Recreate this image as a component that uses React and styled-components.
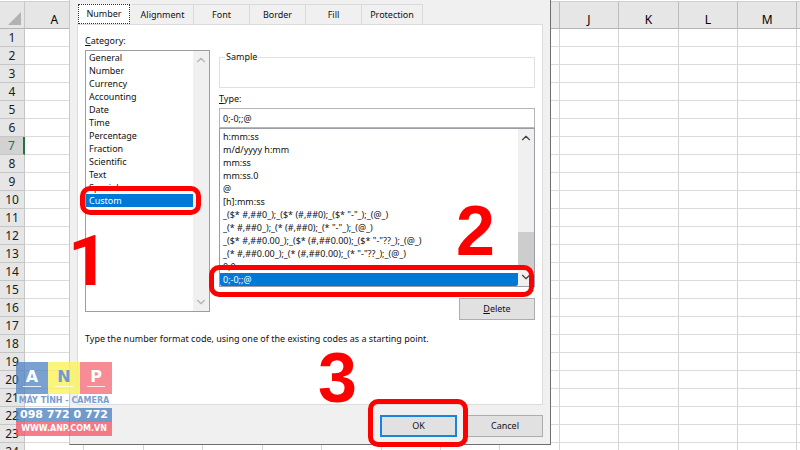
import { useState } from "react"
import { ChevronDown, ChevronUp } from "lucide-react"
import styled, { createGlobalStyle } from "styled-components"

const GlobalStyle = createGlobalStyle`
  * {
    box-sizing: border-box;
  }
  body {
    margin: 0;
    background-color: white;
    color: #111;
    font-family: "Noto Sans", "Open Sans", sans-serif;
  }
`;

const Page = styled.main`
  position: relative;
  height: 100vh;
  overflow: hidden;
`;

const Sheet = styled.table`
  width: calc(100% + 57px);
  margin-top: 1px;
  table-layout: fixed;
  border-collapse: separate;
  border-spacing: 0;
  border-top: 1px solid #cfcfcf;
`;

const Corner = styled.th`
  width: 25px;
  height: 27px;
  padding: 0 2px 2px 0;
  text-align: right;
  vertical-align: bottom;
  background-color: #e6e6e6;
  border-right: 1px solid #c6c6c6;
  border-bottom: 1px solid #b4b4b4;

  svg {
    display: block;
    margin-left: auto;
  }
`;

const ColumnHead = styled.th`
  height: 27px;
  padding: 10px 0 0;
  font-size: 12px;
  line-height: 16px;
  font-weight: 400;
  color: black;
  background-color: #e6e6e6;
  border-right: 1px solid #bcbcbc;
  border-bottom: 1px solid #b4b4b4;
`;

const RowHead = styled.th`
  height: 18px;
  padding: 0;
  font-size: 12px;
  line-height: 17px;
  font-weight: 400;
  text-align: center;
  color: ${(props) => (props.$active ? "#217346" : "#1c1c1c")};
  background-color: ${(props) => (props.$active ? "#d2d2d2" : "#e6e6e6")};
  border-right: ${(props) =>
    props.$active ? "2px solid #217346" : "1px solid #c6c6c6"};
  border-bottom: 1px solid #c6c6c6;
`;

const Cell = styled.td`
  padding: 0;
  border-right: 1px solid #d4d4d4;
  border-bottom: 1px solid #dcdcdc;
`;

const Dialog = styled.section`
  position: absolute;
  top: 0;
  left: 69px;
  width: calc(60vw + 2px);
  padding: 4px 7px 7px;
  font-size: 9px;
  line-height: 14px;
  background-color: #f0f0f0;
  border: 1px solid #6e6e6e;
  border-top: none;
  border-left-color: #c8c8c8;
`;

const Tabs = styled.div`
  display: flex;
  height: 20px;
`;

const Tab = styled.button`
  width: ${(props) => props.$width}px;
  padding: 0;
  font: inherit;
  line-height: 14px;
  color: inherit;
  background-color: #f0f0f0;
  border: solid #d9d9d9;
  border-width: 1px 1px 0 0;

  &[aria-selected="true"] {
    margin: 0 2px 0 1px;
    background-color: white;
    border: 1px dotted #333;
  }
`;

const Panel = styled.div`
  padding: 9px 7px 58px;
  background-color: white;
  border: 1px solid #dcdcdc;
`;

const Columns = styled.div`
  display: flex;
  gap: 9px;
`;

const CategoryColumn = styled.div`
  flex: 0 0 125px;
`;

const TypeColumn = styled.div`
  flex: 1;
  display: flex;
  flex-direction: column;
  padding-top: 16px;
`;

const Label = styled.label`
  display: block;
  margin-bottom: 2px;
`;

const ListFrame = styled.div`
  position: relative;
  display: flex;
  height: ${(props) => props.$height}px;
  background-color: white;
  border: 1px solid #9a9da3;
`;

const List = styled.select`
  flex: 1;
  min-width: 0;
  height: 100%;
  padding: ${(props) => props.$padding || "0"};
  overflow: hidden;
  font: inherit;
  color: inherit;
  background-color: white;
  border: none;
  outline: none;

  option {
    min-height: 13px;
    height: 13px;
    padding: 0 3px;
    line-height: 13px;
    overflow: hidden;
  }
  option:checked {
    color: white;
    -webkit-text-fill-color: white;
    background: linear-gradient(#0078d7, #0078d7);
  }
`;

const ScrollBar = styled.div`
  flex: 0 0 16px;
  display: flex;
  flex-direction: column;
  align-items: center;
  justify-content: space-between;
  padding: 2px 0;
  color: ${(props) => (props.$disabled ? "#b4b4b4" : "#404040")};
  background-color: #f0f0f0;
`;

const ScrollThumb = styled.div`
  width: 100%;
  height: 38px;
  margin-top: auto;
  background-color: #cdcdcd;
`;

const Sample = styled.fieldset`
  height: 38px;
  margin: 0 0 4px;
  padding: 0 5px;
  border: 1px solid #e0e0e0;
`;

const Legend = styled.legend`
  padding: 0 1px;
`;

const TypeInput = styled.input`
  width: 100%;
  height: 20px;
  padding: 0 3px;
  font: inherit;
  color: inherit;
  background-color: white;
  border: 1px solid #b4b6ba;
  outline: none;
`;

const Button = styled.button`
  width: ${(props) => props.$width || 76}px;
  height: 22px;
  padding: 0;
  font: inherit;
  color: inherit;
  background-color: #e1e1e1;
  border: ${(props) =>
    props.$primary ? "2px solid #1a84da" : "1px solid #adadad"};
`;

const DeleteButton = styled(Button)`
  align-self: flex-end;
  margin-top: 11px;
`;

const Hint = styled.p`
  margin: 12px 0 0;
  white-space: nowrap;
`;

const Footer = styled.div`
  display: flex;
  justify-content: flex-end;
  gap: 10px;
  padding-top: 10px;
`;

const OkSlot = styled.div`
  position: relative;
`;

const Callout = styled.div`
  position: absolute;
  inset: ${(props) => props.$inset};
  border: 5px solid #ff0000;
  border-radius: 10px;
  pointer-events: none;
`;

const Step = styled.span`
  position: absolute;
  top: ${(props) => props.$top}px;
  left: ${(props) => props.$left};
  right: ${(props) => props.$right};
  font-family: ${(props) =>
    props.$plain ? "Roboto, sans-serif" : '"Liberation Sans", Arial, sans-serif'};
  font-size: 70px;
  line-height: 72px;
  font-weight: 700;
  color: #ff0000;
  pointer-events: none;
`;

const Logo = styled.div`
  position: absolute;
  top: 362px;
  left: 16px;
  width: 96px;
  font-family: "DejaVu Sans", sans-serif;
  font-weight: 700;
  text-align: center;
  white-space: nowrap;
  color: white;
`;

const LogoTiles = styled.div`
  display: flex;
`;

const LogoTile = styled.div`
  flex: 1;
  display: flex;
  flex-direction: column;
  align-items: center;
  height: 32px;
  padding-top: 6px;
  font-size: 16px;
  line-height: 18px;
  color: ${(props) => props.$ink || "white"};
  background-color: ${(props) => props.$fill};

  &::after {
    content: "";
    width: 18px;
    height: 1px;
    background-color: rgba(255, 255, 255, 0.8);
  }
`;

const LogoLine = styled.div`
  height: 14px;
  font-size: ${(props) => props.$size}px;
  line-height: 14px;
  color: ${(props) => props.$ink};
  background-color: ${(props) => props.$fill};
`;

const columns = ["A", "B", "C", "D", "E", "F", "G", "H", "I", "J", "K", "L", "M", ""]
const rows = Array.from({ length: 24 }, (_, i) => i + 1)

const tabs = [
  { name: "Number", width: 52 },
  { name: "Alignment", width: 62 },
  { name: "Font", width: 56 },
  { name: "Border", width: 56 },
  { name: "Fill", width: 56 },
  { name: "Protection", width: 61 },
]

const categories = [
  "General",
  "Number",
  "Currency",
  "Accounting",
  "Date",
  "Time",
  "Percentage",
  "Fraction",
  "Scientific",
  "Text",
  "Special",
  "Custom",
]

const formats = [
  "h:mm:ss",
  "m/d/yyyy h:mm",
  "mm:ss",
  "mm:ss.0",
  "@",
  "[h]:mm:ss",
  '_($* #,##0_);_($* (#,##0);_($* "-"_);_(@_)',
  '_(* #,##0_);_(* (#,##0);_(* "-"_);_(@_)',
  '_($* #,##0.00_);_($* (#,##0.00);_($* "-"??_);_(@_)',
  '_(* #,##0.00_);_(* (#,##0.00);_(* "-"??_);_(@_)',
  "0;0",
  "0;-0;;@",
]

const Spreadsheet = () => (
  <Sheet>
    <thead>
      <tr>
        <Corner>
          <svg width="14" height="14" viewBox="0 0 14 14">
            <path d="M13 0V13H0Z" fill="#b2b2b2" />
          </svg>
        </Corner>
        {columns.map((name) => (
          <ColumnHead key={name} scope="col">{name}</ColumnHead>
        ))}
      </tr>
    </thead>
    <tbody>
      {rows.map((row) => (
        <tr key={row}>
          <RowHead scope="row" $active={row === 7}>{row}</RowHead>
          {columns.map((name) => (
            <Cell key={name} />
          ))}
        </tr>
      ))}
    </tbody>
  </Sheet>
)

const FormatDialog = () => {
  const [tab, setTab] = useState("Number")
  const [category, setCategory] = useState("Custom")
  const [format, setFormat] = useState("0;-0;;@")

  return (
    <Dialog role="dialog">
      <Tabs role="tablist">
        {tabs.map(({ name, width }) => (
          <Tab
            key={name}
            role="tab"
            $width={width}
            aria-selected={tab === name}
            onClick={() => setTab(name)}
          >
            {name}
          </Tab>
        ))}
      </Tabs>
      <Panel>
        <Columns>
          <CategoryColumn>
            <Label htmlFor="category"><u>C</u>ategory:</Label>
            <ListFrame $height={262}>
              <List
                id="category"
                size={12}
                value={category}
                onChange={(e) => setCategory(e.target.value)}
              >
                {categories.map((name) => (
                  <option key={name}>{name}</option>
                ))}
              </List>
              <ScrollBar $disabled>
                <ChevronUp size={14} />
                <ChevronDown size={14} />
              </ScrollBar>
              <Callout $inset="135px 8px 96px -6px" />
              <Step $plain $top={174} $left="-18px">1</Step>
            </ListFrame>
          </CategoryColumn>
          <TypeColumn>
            <Sample>
              <Legend>Sample</Legend>
            </Sample>
            <Label htmlFor="type"><u>T</u>ype:</Label>
            <TypeInput
              id="type"
              value={format}
              onChange={(e) => setFormat(e.target.value)}
            />
            <ListFrame $height={159}>
              <List
                aria-labelledby="type"
                size={12}
                $padding="1px 0 0"
                value={format}
                onChange={(e) => setFormat(e.target.value)}
              >
                {formats.map((code) => (
                  <option key={code}>{code}</option>
                ))}
              </List>
              <ScrollBar>
                <ChevronUp size={14} />
                <ScrollThumb />
                <ChevronDown size={14} />
              </ScrollBar>
              <Callout $inset="136px 0 -11px -11px" />
              <Step $top={66} $right="39px">2</Step>
            </ListFrame>
            <DeleteButton><span><u>D</u>elete</span></DeleteButton>
          </TypeColumn>
        </Columns>
        <Hint>Type the number format code, using one of the existing codes as a starting point.</Hint>
      </Panel>
      <Footer>
        <OkSlot>
          <Button $primary $width={77}>OK</Button>
          <Callout $inset="-16px -11px -10px -12px" />
          <Step $top={-73} $left="-62px">3</Step>
        </OkSlot>
        <Button>Cancel</Button>
      </Footer>
    </Dialog>
  )
}

const Watermark = () => (
  <Logo>
    <LogoTiles>
      <LogoTile $fill="rgba(70, 125, 190, 0.72)">A</LogoTile>
      <LogoTile $fill="rgba(250, 242, 90, 0.8)" $ink="#6f9bd0">N</LogoTile>
      <LogoTile $fill="rgba(245, 95, 110, 0.72)">P</LogoTile>
    </LogoTiles>
    <LogoLine $size={8} $ink="#7ba0cf">MÁY TÍNH - CAMERA</LogoLine>
    <LogoLine $size={11} $fill="rgba(70, 125, 190, 0.75)">098 772 0 772</LogoLine>
    <LogoLine $size={8} $fill="rgba(245, 80, 98, 0.75)">WWW.ANP.COM.VN</LogoLine>
  </Logo>
)

const App = () => {
  return (
    <Page>
      <GlobalStyle />
      <Spreadsheet />
      <FormatDialog />
      <Watermark />
    </Page>
  );
};

export default App;
